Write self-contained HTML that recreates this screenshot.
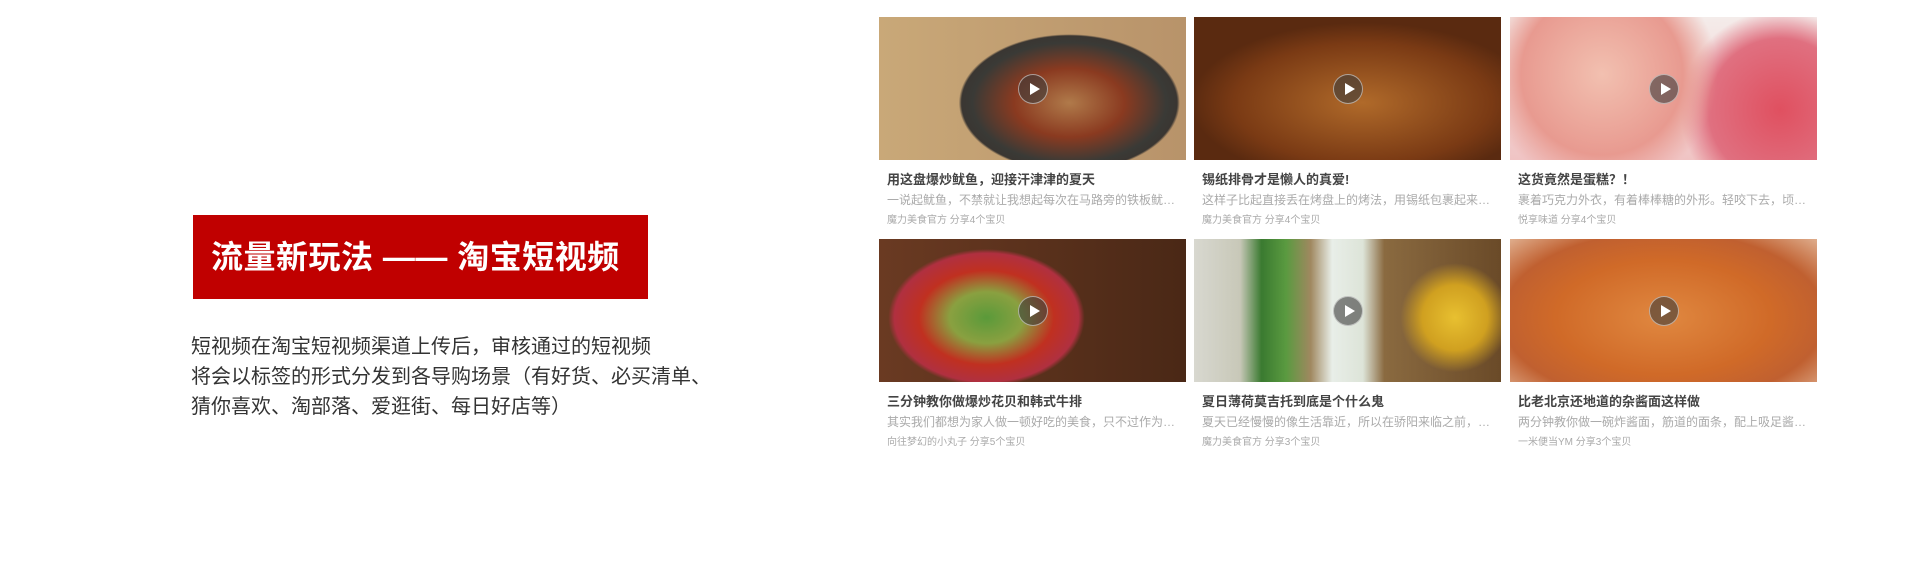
<!DOCTYPE html>
<html><head><meta charset="utf-8"><style>
body{margin:0;width:1920px;height:564px;background:#fff;position:relative;overflow:hidden;font-family:"Liberation Sans","Noto Sans CJK SC",sans-serif}
.box{position:absolute;left:193px;top:215px;width:455px;height:84px;background:#c00000;color:#fff;font-weight:bold;font-size:32px;line-height:84px;padding-left:18px;box-sizing:border-box;letter-spacing:0.5px}
.p{position:absolute;left:191px;top:332px;font-size:20px;line-height:30px;color:#333}
.card{position:absolute;width:307px}
.img{height:143px;position:relative}
.play{position:absolute;left:50%;top:50%;width:30px;height:30px;margin:-15px 0 0 -15px;border-radius:50%;background:rgba(60,60,60,.6);border:1.5px solid rgba(255,255,255,.5);box-sizing:border-box}
.play:after{content:"";position:absolute;left:11px;top:8px;border-left:10px solid #fff;border-top:6px solid transparent;border-bottom:6px solid transparent}
.t{font-size:13px;font-weight:bold;color:#444;margin:12px 0 0 8px;line-height:16px}
.d{font-size:12px;color:#aaa;margin:4px 0 0 8px;line-height:16px;white-space:nowrap;overflow:hidden;width:292px;text-overflow:ellipsis}
.m{font-size:10px;color:#aaa;margin:6px 0 0 8px;line-height:14px}
</style></head><body>
<div class="box">流量新玩法 —— 淘宝短视频</div>
<div class="p">短视频在淘宝短视频渠道上传后，审核通过的短视频<br>将会以标签的形式分发到各导购场景（有好货、必买清单、<br>猜你喜欢、淘部落、爱逛街、每日好店等）</div>

<div class="card" style="left:879px;top:17px"><div class="img" style="background:radial-gradient(ellipse 45% 60% at 62% 60%,#b07a4a 0%,#8a3a20 40%,#3a3a36 70%,#3a3632 78%,transparent 80%),linear-gradient(90deg,#c9a878,#b8936a)"><div class="play"></div></div>
<div class="t">用这盘爆炒鱿鱼，迎接汗津津的夏天</div><div class="d">一说起鱿鱼，不禁就让我想起每次在马路旁的铁板鱿鱼...</div><div class="m">魔力美食官方 分享4个宝贝</div></div>
<div class="card" style="left:1194px;top:17px"><div class="img" style="background:radial-gradient(ellipse 70% 70% at 55% 60%,#b06a2a,#7a3a14 60%,#5a2a10 80%),linear-gradient(#ccc,#ddd)"><div class="play"></div></div>
<div class="t">锡纸排骨才是懒人的真爱!</div><div class="d">这样子比起直接丢在烤盘上的烤法，用锡纸包裹起来烤...</div><div class="m">魔力美食官方 分享4个宝贝</div></div>
<div class="card" style="left:1510px;top:17px"><div class="img" style="background:radial-gradient(circle at 30% 40%,#f2c0b0,#e89a90 35%,transparent 50%),radial-gradient(circle at 88% 65%,#e05060,#e07080 25%,transparent 35%),linear-gradient(#f4ecea,#f0c4c4)"><div class="play"></div></div>
<div class="t">这货竟然是蛋糕？！</div><div class="d">裹着巧克力外衣，有着棒棒糖的外形。轻咬下去，顷刻...</div><div class="m">悦享味道 分享4个宝贝</div></div>

<div class="card" style="left:879px;top:239px"><div class="img" style="background:radial-gradient(ellipse 40% 60% at 35% 55%,#5a9a3a,#8aa040 30%,#c03020 55%,#b03040 75%,transparent 80%),linear-gradient(90deg,#6a3a22,#4a2816)"><div class="play"></div></div>
<div class="t">三分钟教你做爆炒花贝和韩式牛排</div><div class="d">其实我们都想为家人做一顿好吃的美食，只不过作为手...</div><div class="m">向往梦幻的小丸子 分享5个宝贝</div></div>
<div class="card" style="left:1194px;top:239px"><div class="img" style="background:radial-gradient(circle at 85% 55%,#e8c030,#d0a020 12%,transparent 20%),linear-gradient(90deg,#d8d8d0 0%,#c8c8b8 15%,#3a7a30 22%,#5a9a40 30%,#a08860 38%,#e8eee8 45%,#dde4d8 55%,#8a6a40 62%,#6a4a28 100%)"><div class="play"></div></div>
<div class="t">夏日薄荷莫吉托到底是个什么鬼</div><div class="d">夏天已经慢慢的像生活靠近，所以在骄阳来临之前，妮...</div><div class="m">魔力美食官方 分享3个宝贝</div></div>
<div class="card" style="left:1510px;top:239px"><div class="img" style="background:radial-gradient(ellipse 70% 80% at 50% 55%,#e08840,#d06a28 50%,#c06030 75%,#e0b090)"><div class="play"></div></div>
<div class="t">比老北京还地道的杂酱面这样做</div><div class="d">两分钟教你做一碗炸酱面，筋道的面条，配上吸足酱汁...</div><div class="m">一米便当YM 分享3个宝贝</div></div>
</body></html>
